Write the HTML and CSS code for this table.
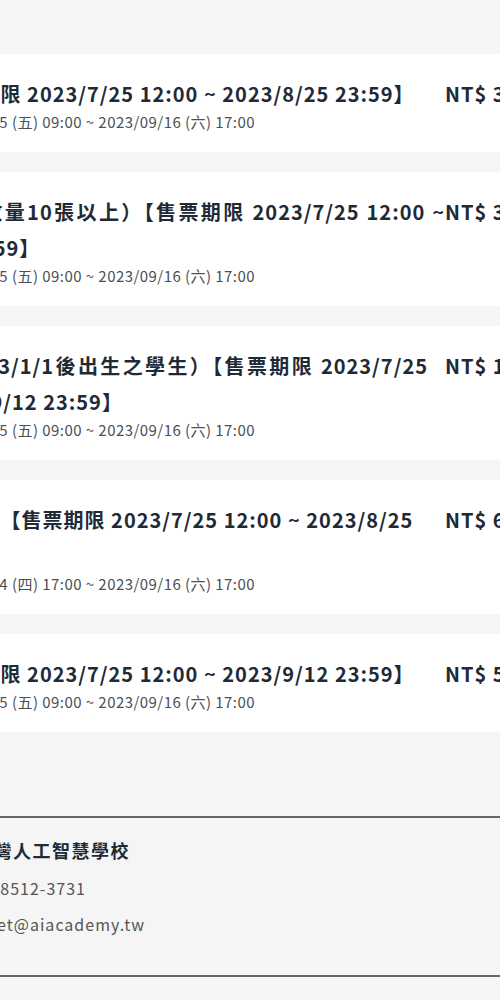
FILE: index.html
```html
<!DOCTYPE html>
<html lang="zh-Hant">
<head>
<meta charset="utf-8">
<title>票種</title>
<link rel="stylesheet" href="styles.css">
</head>
<body>
<div class="page">
  <div class="tickets">
    <div class="ticket">
      <div class="info">
        <div class="name">早鳥票 【售票期限 2023/7/25 12:00 ~ 2023/8/25 23:59】</div>
        <div class="date"><span class="label">活動時間：</span>2023/08/25 (五) 09:00 ~ 2023/09/16 (六) 17:00</div>
      </div>
      <div class="price">NT$ 3,500</div>
    </div>
    <div class="ticket">
      <div class="info">
        <div class="name">團體票（購買數量10張以上）【售票期限 2023/7/25 12:00 ~ 2023/8/25 23:59】</div>
        <div class="date"><span class="label">活動時間：</span>2023/08/25 (五) 09:00 ~ 2023/09/16 (六) 17:00</div>
      </div>
      <div class="price">NT$ 3,200</div>
    </div>
    <div class="ticket">
      <div class="info">
        <div class="name name-narrow">學生方案（2003/1/1後出生之學生）【售票期限 2023/7/25 12:00 ~ 2023/9/12 23:59】</div>
        <div class="date"><span class="label">活動時間：</span>2023/08/25 (五) 09:00 ~ 2023/09/16 (六) 17:00</div>
      </div>
      <div class="price">NT$ 1,800</div>
    </div>
    <div class="ticket">
      <div class="info">
        <div class="name">貴賓票（含餐） 【售票期限 2023/7/25 12:00 ~ 2023/8/25<br>23:59】</div>
        <div class="date"><span class="label">活動時間：</span>2023/08/24 (四) 17:00 ~ 2023/09/16 (六) 17:00</div>
      </div>
      <div class="price">NT$ 6,000</div>
    </div>
    <div class="ticket">
      <div class="info">
        <div class="name">一般票 【售票期限 2023/7/25 12:00 ~ 2023/9/12 23:59】</div>
        <div class="date"><span class="label">活動時間：</span>2023/08/25 (五) 09:00 ~ 2023/09/16 (六) 17:00</div>
      </div>
      <div class="price">NT$ 5,000</div>
    </div>
  </div>
  <footer class="footer">
    <div class="org">台灣人工智慧學校</div>
    <div class="contact">02-8512-3731</div>
    <div class="contact contact-mail">ticket@aiacademy.tw</div>
  </footer>
</div>
</body>
</html>
```

FILE: styles.css
```css
html, body {
  margin: 0;
  padding: 0;
  background: #f5f5f5;
  overflow: hidden;
}

body {
  font-family: "Noto Sans CJK TC", "Noto Sans", sans-serif;
  color: #212b36;
}

.page {
  width: 900px;
  margin-left: -200px;
}

.tickets {
  display: flex;
  flex-direction: column;
  gap: 20px;
  padding-top: 54px;
}

.ticket {
  display: flex;
  background: #ffffff;
  padding: 22px 40px 20px 48px;
}

.info {
  flex: 1;
  min-width: 0;
}

.name {
  font-size: 20px;
  font-weight: 700;
  line-height: 36px;
  letter-spacing: 1px;
  text-align: justify;
  color: #1f2a37;
}

.name-narrow {
  padding-right: 17px;
}

.date {
  font-size: 15px;
  line-height: 20px;
  letter-spacing: 0.45px;
  color: #4a5057;
}

.price {
  flex: none;
  width: 215px;
  font-size: 20px;
  font-weight: 700;
  line-height: 36px;
  letter-spacing: 1px;
  color: #1f2a37;
}

.footer {
  margin-top: 84px;
  border-top: 2px solid #666666;
  border-bottom: 2px solid #666666;
  padding: 14px 0 33px 174px;
}

.org {
  font-size: 18px;
  font-weight: 700;
  line-height: 36px;
  letter-spacing: 1.5px;
  margin-bottom: 2px;
  color: #1f2a37;
}

.contact {
  font-size: 16px;
  line-height: 36px;
  letter-spacing: 1px;
  color: #555555;
}

.contact-mail {
  margin-left: -8px;
}
```
